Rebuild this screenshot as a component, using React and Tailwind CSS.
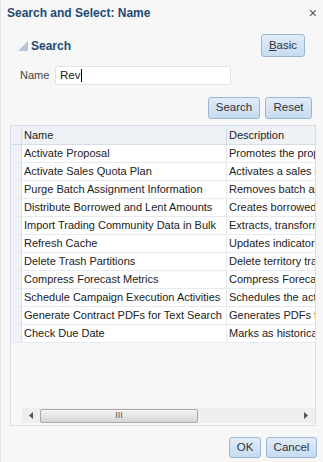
import React from "react";

const rows = [
  ["Activate Proposal", "Promotes the proposal"],
  ["Activate Sales Quota Plan", "Activates a sales quota plan"],
  ["Purge Batch Assignment Information", "Removes batch assignment"],
  ["Distribute Borrowed and Lent Amounts", "Creates borrowed and lent"],
  ["Import Trading Community Data in Bulk", "Extracts, transforms"],
  ["Refresh Cache", "Updates indicator"],
  ["Delete Trash Partitions", "Delete territory trash"],
  ["Compress Forecast Metrics", "Compress Forecast"],
  ["Schedule Campaign Execution Activities", "Schedules the activities"],
  ["Generate Contract PDFs for Text Search", "Generates PDFs for"],
  ["Check Due Date", "Marks as historical"],
];

const btn =
  "h-full rounded-[3px] border border-[#9bb6d3] bg-gradient-to-b from-[#e1ecf8] to-[#c6dbf1] text-[11.5px] text-[#333] flex items-center justify-center";

export default function App() {
  return (
    <div
      className="w-[323px] h-[462px] bg-[#f7f7f7] border-l border-[#e3e3e3] flex flex-col overflow-hidden"
      style={{ fontFamily: "Tahoma, 'Liberation Sans', Arial, sans-serif" }}
    >
      {/* title bar */}
      <div className="h-[26px] flex items-center justify-between pl-[6px] pr-[6px]">
        <span className="text-[12px] font-bold text-[#1d4b73]">Search and Select: Name</span>
        <span className="text-[14px] text-[#555] leading-none">×</span>
      </div>

      {/* search header */}
      <div className="mt-[8px] h-[23px] flex items-center pl-[17px] pr-[18px]">
        <svg width="10" height="10" viewBox="0 0 10 10" className="mr-[3px] mt-[1px]">
          <polygon points="10,0 10,10 0,10" fill="#b8c6d6" />
        </svg>
        <span className="text-[12px] font-bold text-[#1d4b73]">Search</span>
        <div className="ml-auto w-[44px] h-[23px]">
          <button className={btn + " w-full"}>
            <span className="underline underline-offset-1">B</span>asic
          </button>
        </div>
      </div>

      {/* name field */}
      <div className="mt-[9px] h-[19px] flex items-center pl-[19px]">
        <span className="text-[11px] text-[#444] w-[35px]">Name</span>
        <div className="w-[176px] h-[19px] bg-white border border-[#dfe4ea] rounded-[2px] flex items-center pl-[4px] text-[11.5px] text-[#222]">
          Rev<span className="inline-block w-px h-[13px] bg-black ml-px" />
        </div>
      </div>

      {/* search / reset */}
      <div className="mt-[12px] h-[22px] flex justify-end gap-[5px] pr-[11px]">
        <button className={btn + " w-[52px]"}>Search</button>
        <button className={btn + " w-[47px]"}>Reset</button>
      </div>

      {/* table */}
      <div className="mt-[6px] ml-[9px] w-[306px] h-[301px] border border-[#d5dee6] bg-[#f6f8fa] flex flex-col overflow-hidden">
        <div className="h-[19px] flex bg-[#eef2f6] border-b border-[#d5dee6] text-[11px] text-[#222]">
          <div className="w-[11px] border-r border-[#d5dee6]" />
          <div className="w-[205px] pl-[2px] flex items-center border-r border-[#d5dee6]">Name</div>
          <div className="flex-1 pl-[2px] flex items-center whitespace-nowrap overflow-hidden">Description</div>
        </div>
        {rows.map(([n, d]) => (
          <div key={n} className="h-[18px] flex border-b border-[#e6ebf0] text-[11px] text-[#222]">
            <div className="w-[11px] bg-[#eef2f6] border-r border-[#d5dee6]" />
            <div className="w-[205px] pl-[2px] bg-white flex items-center border-r border-[#e6ebf0] whitespace-nowrap overflow-hidden">
              {n}
            </div>
            <div className="flex-1 min-w-0 pl-[2px] bg-white flex items-center whitespace-nowrap overflow-hidden">{d}</div>
          </div>
        ))}
        <div className="flex-1" />
        {/* horizontal scrollbar */}
        <div className="h-[15px] ml-[11px] mb-[2px] bg-[#eeeeee] flex items-center">
          <div className="w-[18px] flex justify-center">
            <svg width="4" height="7" viewBox="0 0 4 7">
              <polygon points="4,0 4,7 0,3.5" fill="#555" />
            </svg>
          </div>
          <div className="w-[158px] h-[14px] rounded-[2px] border border-[#a8a8a8] bg-gradient-to-b from-[#f4f4f4] to-[#d6d6d6] flex items-center justify-center">
            <span className="text-[9px] text-[#555] leading-none">III</span>
          </div>
          <div className="flex-1" />
          <div className="w-[18px] flex justify-center">
            <svg width="4" height="7" viewBox="0 0 4 7">
              <polygon points="0,0 0,7 4,3.5" fill="#555" />
            </svg>
          </div>
        </div>
      </div>

      {/* ok / cancel */}
      <div className="mt-[11px] h-[21px] flex justify-end gap-[5px] pr-[6px]">
        <button className={btn + " w-[32px]"}>OK</button>
        <button className={btn + " w-[51px]"}>Cancel</button>
      </div>
    </div>
  );
}
